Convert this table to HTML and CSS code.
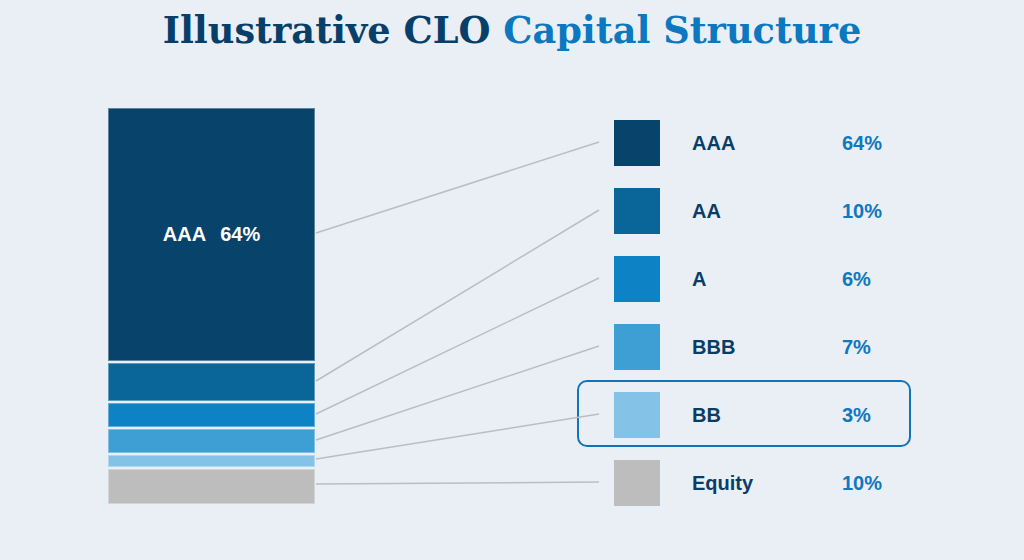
FILE: index.html
```html
<!DOCTYPE html>
<html lang="en">
<head>
<meta charset="utf-8">
<title>Illustrative CLO Capital Structure</title>
<link rel="stylesheet" href="styles.css">
</head>
<body>
<div class="page">
  <h1 class="title">Illustrative CLO <span class="title-accent">Capital Structure</span></h1>
  <div class="chart">
    <div class="stack">
      <div class="seg seg-aaa"><span>AAA</span><span>64%</span></div>
      <div class="seg seg-aa"></div>
      <div class="seg seg-a"></div>
      <div class="seg seg-bbb"></div>
      <div class="seg seg-bb"></div>
      <div class="seg seg-eq"></div>
    </div>
    <ul class="legend">
      <li class="row"><span class="swatch seg-aaa"></span><span class="name">AAA</span><span class="pct">64%</span></li>
      <li class="row"><span class="swatch seg-aa"></span><span class="name">AA</span><span class="pct">10%</span></li>
      <li class="row"><span class="swatch seg-a"></span><span class="name">A</span><span class="pct">6%</span></li>
      <li class="row"><span class="swatch seg-bbb"></span><span class="name">BBB</span><span class="pct">7%</span></li>
      <li class="row row-highlight"><span class="swatch seg-bb"></span><span class="name">BB</span><span class="pct">3%</span></li>
      <li class="row"><span class="swatch seg-eq"></span><span class="name">Equity</span><span class="pct">10%</span></li>
    </ul>
  </div>
  <svg class="connectors" viewBox="0 0 1024 560" width="1024" height="560" aria-hidden="true">
    <line x1="316" y1="233" x2="599" y2="142"/>
    <line x1="316" y1="381" x2="599" y2="210"/>
    <line x1="316" y1="414" x2="599" y2="278"/>
    <line x1="316" y1="440" x2="599" y2="346"/>
    <line x1="316" y1="459" x2="599" y2="414"/>
    <line x1="316" y1="484" x2="599" y2="482"/>
  </svg>
</div>
</body>
</html>
```

FILE: styles.css
```css
html, body {
  margin: 0;
  padding: 0;
  background: #eaeff6;
}

.page {
  position: relative;
  width: 1024px;
  height: 560px;
  overflow: hidden;
  background: #eaeff6;
  font-family: "Liberation Sans", Arial, sans-serif;
}

.title {
  margin: 0;
  padding-top: 10px;
  text-align: center;
  font-family: "DejaVu Serif", serif;
  font-weight: bold;
  font-size: 36.7px;
  line-height: 42px;
  color: #083f69;
}

.title-accent {
  color: #0b78c0;
}

.chart {
  display: flex;
  align-items: flex-start;
  margin-top: 56px;
  padding-left: 108px;
}

.stack {
  display: flex;
  flex-direction: column;
  gap: 2px;
  width: 207px;
}

.seg {
  box-sizing: border-box;
  border: 1px solid rgba(255, 255, 255, 0.35);
}

.seg-aaa { background: #07436b; }
.seg-aa { background: #0a6699; }
.seg-a { background: #0d82c5; }
.seg-bbb { background: #3d9fd4; }
.seg-bb { background: #84c3e7; }
.seg-eq { background: #bdbdbd; }

.stack .seg-aaa {
  height: 253px;
  display: flex;
  align-items: center;
  justify-content: center;
  gap: 14px;
  color: #ffffff;
  font-weight: bold;
  font-size: 20px;
}
.stack .seg-aa { height: 38px; }
.stack .seg-a { height: 24px; }
.stack .seg-bbb { height: 24px; }
.stack .seg-bb { height: 12px; }
.stack .seg-eq { height: 35px; }

.legend {
  list-style: none;
  margin: 1px 0 0 262px;
  padding: 0;
}

.row {
  box-sizing: border-box;
  display: flex;
  align-items: center;
  width: 334px;
  height: 68px;
  padding-left: 35px;
  border: 2.5px solid transparent;
  border-radius: 10px;
}

.row-highlight {
  border-color: #1173b9;
  height: 67px;
  margin-top: -1px;
  margin-bottom: 2px;
  padding-top: 3px;
}

.swatch {
  flex: none;
  width: 46px;
  height: 46px;
  border: 0;
}

.name {
  width: 150px;
  margin-left: 32px;
  font-weight: bold;
  font-size: 20px;
  color: #0a3d66;
}

.pct {
  font-weight: bold;
  font-size: 20px;
  color: #0f78c0;
}

.connectors {
  position: absolute;
  left: 0;
  top: 0;
  pointer-events: none;
}

.connectors line {
  stroke: #bdbdbd;
  stroke-width: 1.5;
}
```
